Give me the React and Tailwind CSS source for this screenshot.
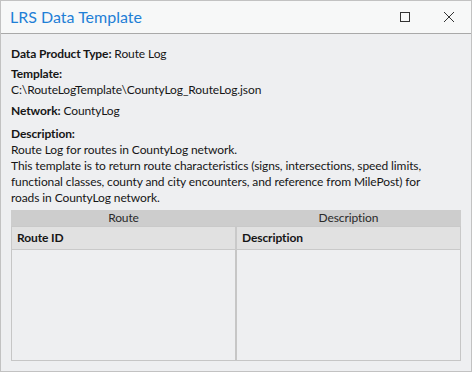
import React from 'react';

const FONT = { fontFamily: 'Lato, "Noto Sans", sans-serif' };

export default function App() {
  return (
    <div
      className="w-[472px] h-[372px] flex flex-col bg-[#eeeff1] border border-[#c2c2c2] text-[#161616] text-[12px] leading-[16px] tracking-[-0.1px]"
      style={FONT}
    >
      {/* Title bar */}
      <div className="h-[33px] shrink-0 flex items-center bg-[#f7f8f8] border-b border-[#a9a9a9]">
        <div className="pl-[9px] text-[16px] tracking-normal text-[#1f7fd6]">LRS Data Template</div>
        <div className="ml-auto flex items-center">
          <svg width="12" height="12" viewBox="0 0 12 12" className="mr-[32px]">
            <rect x="1.5" y="1.5" width="9" height="9" fill="none" stroke="#333" strokeWidth="1" />
          </svg>
          <svg width="12" height="12" viewBox="0 0 12 12" className="mr-[16px]">
            <path d="M1 1 L11 11 M11 1 L1 11" stroke="#333" strokeWidth="1" />
          </svg>
        </div>
      </div>

      {/* Content */}
      <div className="flex-1 flex flex-col px-[10px] pt-[12px] pb-[10px]">
        <div>
          <span className="font-bold">Data Product Type:</span> Route Log
        </div>
        <div className="mt-[4px] font-bold">Template:</div>
        <div>C:\RouteLogTemplate\CountyLog_RouteLog.json</div>
        <div className="mt-[5px]">
          <span className="font-bold">Network:</span> CountyLog
        </div>
        <div className="mt-[7px] font-bold">Description:</div>
        <div className="whitespace-nowrap">
          Route Log for routes in CountyLog network.
          <br />
          This template is to return route characteristics (signs, intersections, speed limits,
          <br />
          functional classes, county and city encounters, and reference from MilePost) for
          <br />
          roads in CountyLog network.
        </div>

        {/* Table */}
        <div className="mt-[4px] flex-1 grid grid-cols-2 w-[450px]">
          {['Route', 'Description'].map((band, i) => (
            <div key={band} className="flex flex-col">
              <div className="h-[16px] bg-[#cdcdcd] text-center text-[#2a2a2a] leading-[16px]">{band}</div>
              <div className="h-[24px] bg-[#e1e1e1] border border-[#c9c9c9] flex items-center pl-[5px] font-bold">
                {i === 0 ? 'Route ID' : 'Description'}
              </div>
              <div className="flex-1 border border-t-0 border-[#c6c6c6]" />
            </div>
          ))}
        </div>
      </div>
    </div>
  );
}
